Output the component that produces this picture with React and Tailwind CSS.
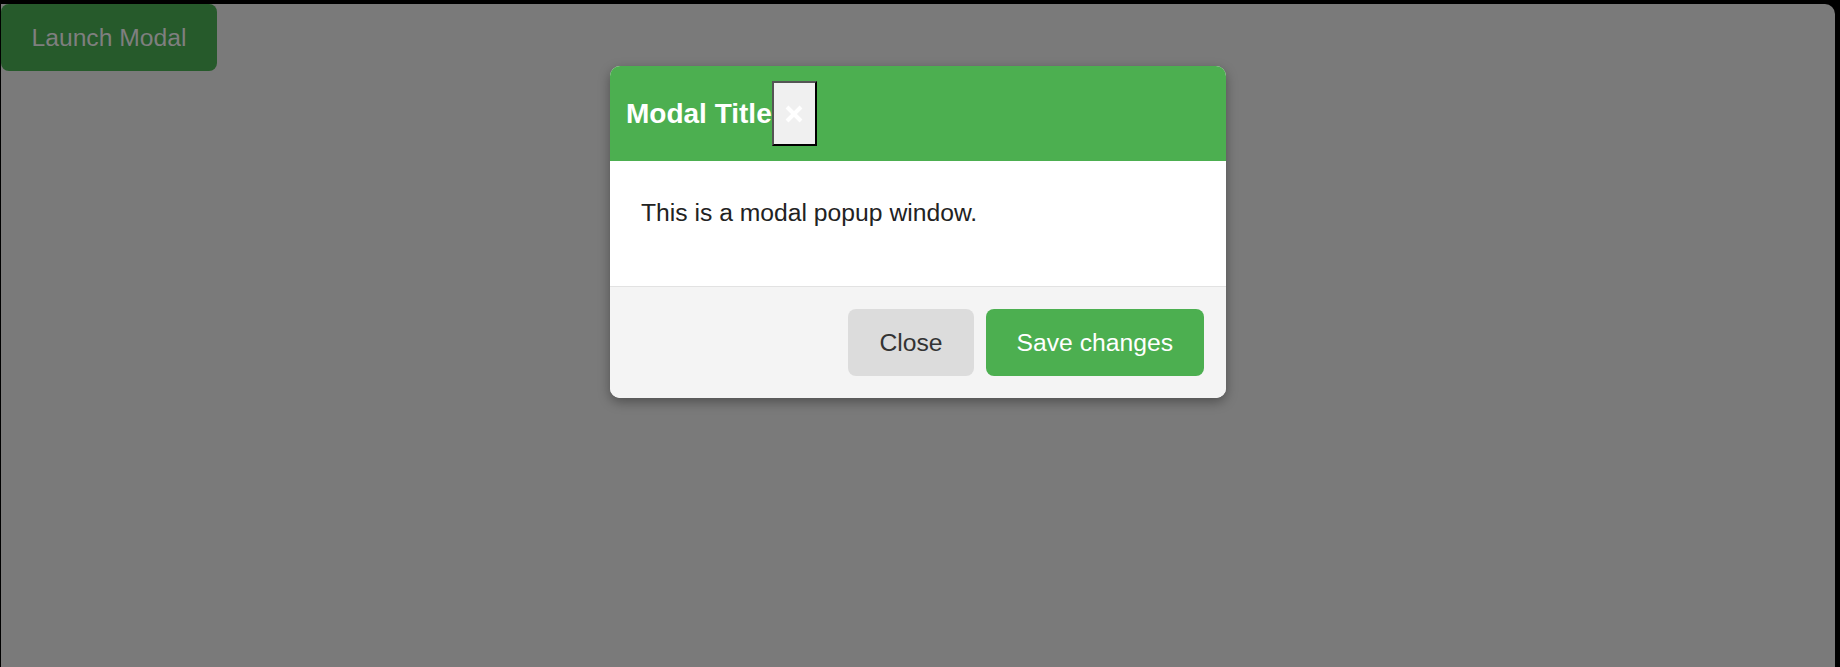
import React from "react";

function ModalPopup() {
  return (
    <div className="w-[616px] rounded-[10px] bg-white shadow-[0_4px_12px_rgba(0,0,0,0.35)]">
      <div className="flex h-[95px] items-center rounded-t-[10px] bg-[#4caf50] px-4">
        <h2 className="text-[28px] font-bold leading-none text-white">Modal Title</h2>
        <button
          aria-label="Close"
          className="flex h-[65px] w-[45px] items-center justify-center border-2 border-t-[#555] border-l-[#555] border-r-black border-b-black bg-[#f0f0f0]"
        >
          <svg width="18" height="18" viewBox="0 0 18 18">
            <path d="M2 2 L16 16 M16 2 L2 16" stroke="white" strokeWidth="4" />
          </svg>
        </button>
      </div>
      <div className="h-[125px] px-[31px] pt-[38px]">
        <p className="text-[24.7px] leading-[28px] text-[#222]">This is a modal popup window.</p>
      </div>
      <div className="flex h-[112px] items-center justify-end gap-3 rounded-b-[10px] border-t border-[#e2e2e2] bg-[#f4f4f4] px-[22px]">
        <button className="h-[67px] rounded-lg bg-[#dcdcdc] px-[31px] text-[24.7px] text-[#333]">Close</button>
        <button className="h-[67px] rounded-lg bg-[#4caf50] px-[31px] text-[24.7px] text-white">Save changes</button>
      </div>
    </div>
  );
}

export default function App() {
  return (
    <div
      className="flex h-[667px] w-full bg-black pt-[4px] pl-[1px] pr-[5px]"
      style={{ fontFamily: '"Liberation Sans", Arial, sans-serif' }}
    >
      <div className="relative flex-1 rounded-tr-[10px] bg-[#7a7a7a]">
        <button className="h-[67px] w-[216px] rounded-lg bg-[#265a2b] text-[24.7px] text-[#7f7f7f]">
          Launch Modal
        </button>
        <div className="absolute inset-x-0 top-[62px] flex justify-center">
          <ModalPopup />
        </div>
      </div>
    </div>
  );
}
